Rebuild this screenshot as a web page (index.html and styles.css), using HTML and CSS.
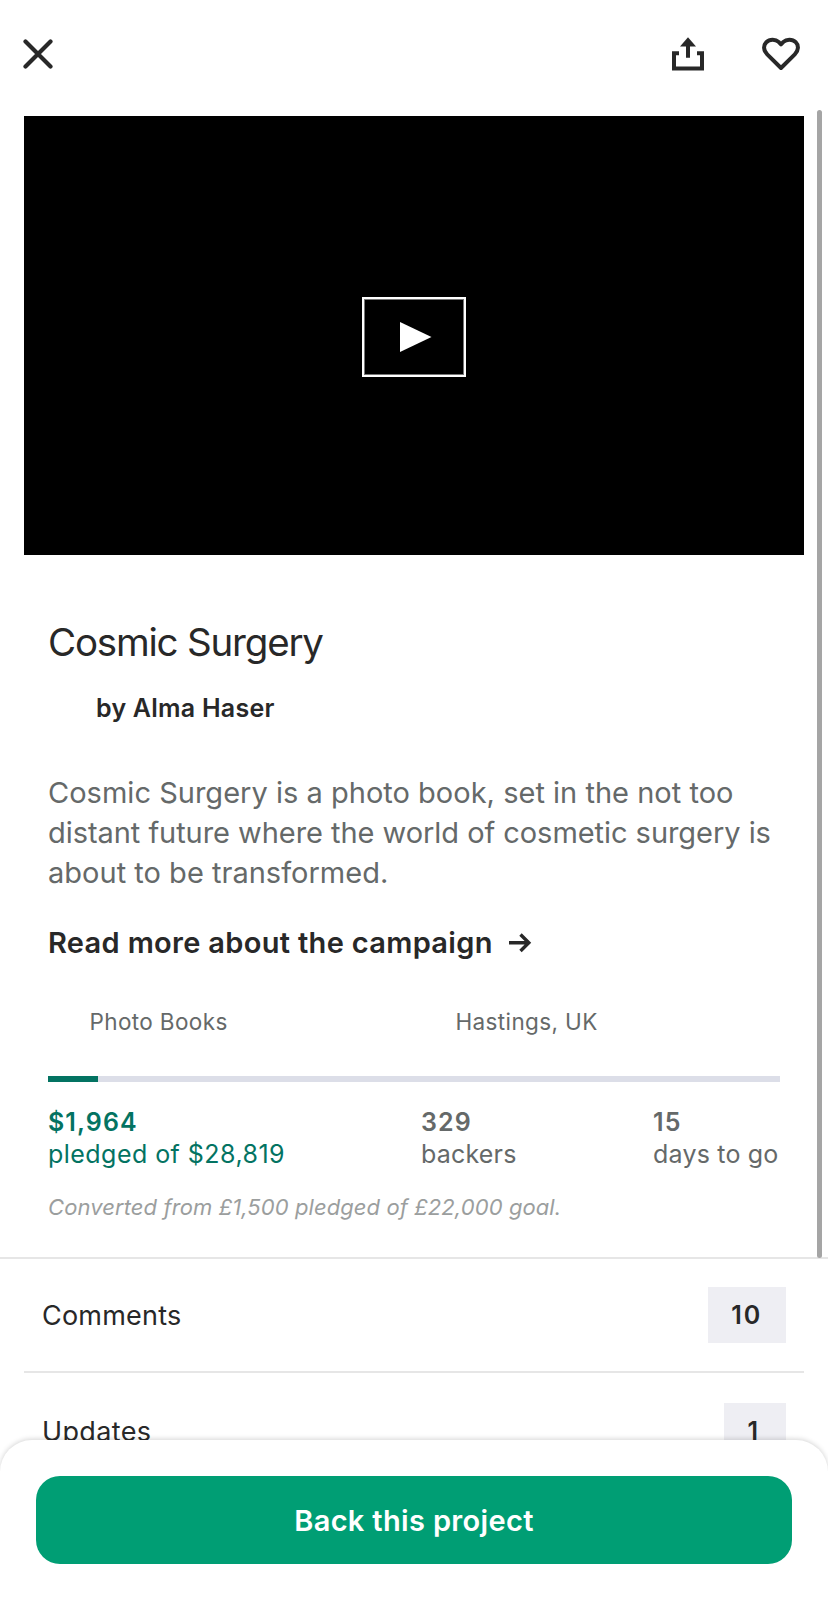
FILE: index.html
```html
<!DOCTYPE html>
<html lang="en">
<head>
<meta charset="utf-8">
<title>Cosmic Surgery</title>
<link rel="stylesheet" href="styles.css">
</head>
<body>
<div class="screen">
  <header class="toolbar">
    <button class="icon-button" aria-label="Close">
      <svg width="30" height="30" viewBox="0 0 30 30"><path d="M2.5 2.5 27.5 27.5M27.5 2.5 2.5 27.5" fill="none" stroke="#282828" stroke-width="4.2" stroke-linecap="round"/></svg>
    </button>
    <div class="toolbar-actions">
      <button class="icon-button" aria-label="Share">
        <svg width="34" height="34" viewBox="0 0 34 34"><path d="M8 16.300H3v15.200h28V16.300h-5M17 8v12.800" fill="none" stroke="#282828" stroke-width="4"/><path d="M17 .3 25 9.500H9z" fill="#282828"/></svg>
      </button>
      <button class="icon-button" aria-label="Save">
        <svg width="38" height="34" viewBox="0 0 38 34"><path d="M19 31 5.200 17.400C1.200 13.400 1.200 8.200 4.300 5.200c3.400-3.400 9.200-3.300 12.300-.3L19 7.400l2.400-2.500c3.100-3 8.900-3.100 12.300.3 3.100 3 3.100 8.200-.9 12.200Z" fill="none" stroke="#282828" stroke-width="4" stroke-linejoin="round"/></svg>
      </button>
    </div>
  </header>

  <main>
    <div class="video">
      <button class="play" aria-label="Play">
        <svg width="32" height="30" viewBox="0 0 32 30"><path d="M0 0 31.500 15 0 30z" fill="#fff"/></svg>
      </button>
    </div>

    <section class="project">
      <h1 class="title">Cosmic Surgery</h1>
      <p class="creator">by Alma Haser</p>
      <p class="blurb">
        <span class="blurb-line">Cosmic Surgery is a photo book, set in the not too</span>
        <span class="blurb-line blurb-line-tight">distant future where the world of cosmetic surgery is</span>
        <span class="blurb-line">about to be transformed.</span>
      </p>
      <a class="read-more">Read more about the campaign
        <svg width="23" height="20" viewBox="0 0 23 20"><path d="M0 9.700h20M11.500 1.500 19.800 9.700 11.500 18" fill="none" stroke="#282828" stroke-width="3.400"/></svg>
      </a>
      <div class="tags">
        <span class="tag">Photo Books</span>
        <span class="tag">Hastings, UK</span>
      </div>
      <div class="progress"><div class="progress-fill"></div></div>
      <div class="stats">
        <div class="stat stat-pledged"><strong>$1,964</strong><span class="stat-goal">pledged of $28,819</span></div>
        <div class="stat stat-backers"><strong>329</strong><span>backers</span></div>
        <div class="stat"><strong>15</strong><span>days to go</span></div>
      </div>
      <p class="conversion">Converted from £1,500 pledged of £22,000 goal.</p>
    </section>

    <nav class="links">
      <a class="link-row"><span>Comments</span><span class="badge">10</span></a>
      <a class="link-row link-row-updates"><span>Updates</span><span class="badge">1</span></a>
    </nav>
  </main>

  <div class="scrollbar"></div>
  <footer class="pledge-bar"><button class="pledge-button">Back this project</button></footer>
</div>
</body>
</html>
```
FILE: styles.css
```css
* { box-sizing: border-box; }

body {
  margin: 0;
  background: #fff;
  color: #282828;
  font-family: Inter, "Liberation Sans", sans-serif;
}

h1, p { margin: 0; }

button {
  padding: 0;
  border: 0;
  background: none;
  font-family: inherit;
}

svg { display: block; }

.screen {
  position: relative;
  height: 1600px;
  overflow: hidden;
}

.toolbar {
  display: flex;
  justify-content: space-between;
  align-items: center;
  height: 116px;
  padding: 0 28px 8px 23px;
}

.toolbar-actions { display: flex; gap: 57px; }

.video {
  display: flex;
  align-items: center;
  justify-content: center;
  height: 439px;
  margin: 0 24px;
  padding-top: 3px;
  background: #000;
}

.play {
  display: flex;
  align-items: center;
  justify-content: center;
  width: 104px;
  height: 80px;
  padding-left: 4px;
  border: 2px solid #fff;
  box-shadow: inset 0 0 0 1px #777;
}

.project {
  height: 702px;
  padding: 63px 48px 0;
}

.title {
  font-size: 38.5px;
  font-weight: 400;
  line-height: 48px;
  letter-spacing: -1.2px;
}

.creator {
  margin-top: 26px;
  padding-left: 48px;
  font-size: 25px;
  font-weight: 600;
  line-height: 32px;
  letter-spacing: 0.24px;
}

.blurb {
  margin-top: 49px;
  color: #656969;
  font-size: 29px;
  line-height: 40px;
  letter-spacing: 0.015px;
}

.blurb-line { display: block; white-space: nowrap; }
.blurb-line-tight { letter-spacing: -0.05px; }

.read-more {
  display: flex;
  align-items: center;
  gap: 16px;
  margin-top: 30px;
  font-size: 29px;
  font-weight: 600;
  line-height: 40px;
  letter-spacing: 0.32px;
}

.tags {
  display: grid;
  grid-template-columns: 1fr 1fr;
  margin-top: 44px;
  color: #656969;
  font-size: 22.5px;
  line-height: 30px;
  letter-spacing: 0.37px;
}

.tag { padding-left: 41.5px; }

.progress {
  height: 6px;
  margin-top: 39px;
  background: #dcdee8;
}

.progress-fill {
  width: 50px;
  height: 100%;
  background: #037362;
}

.stats {
  display: grid;
  grid-template-columns: 373px 232px 1fr;
  margin-top: 24px;
  color: #656969;
  font-size: 25px;
  line-height: 32px;
  letter-spacing: 0.2px;
}

.stat { display: flex; flex-direction: column; white-space: nowrap; }
.stat strong { font-weight: 600; letter-spacing: 1.1px; }
.stat-pledged { color: #037362; }
.stat .stat-goal { letter-spacing: 0.46px; }

.conversion {
  margin-top: 22px;
  color: #9b9e9e;
  font-size: 22px;
  font-style: italic;
  line-height: 30px;
  letter-spacing: 0.09px;
}

.links { border-top: 2px solid #e6e6e6; }

.link-row {
  display: flex;
  align-items: center;
  justify-content: space-between;
  height: 114px;
  margin: 0 24px;
  padding: 0 18px;
  border-bottom: 2px solid #e6e6e6;
  font-size: 27px;
  letter-spacing: 0.22px;
}

.link-row-updates { padding-top: 4px; letter-spacing: 0.35px; }

.badge {
  min-width: 62px;
  padding: 0 24px 0 23.5px;
  background: #eeeef3;
  font-size: 25px;
  font-weight: 600;
  line-height: 56px;
  letter-spacing: 1.8px;
}

.scrollbar {
  position: absolute;
  top: 110px;
  right: 6px;
  width: 5px;
  height: 1148px;
  border-radius: 3px;
  background: #a5a5a5;
}

.pledge-bar {
  position: absolute;
  left: 0;
  right: 0;
  bottom: 0;
  height: 160px;
  padding: 36px;
  border-radius: 32px 32px 0 0;
  background: #fff;
  box-shadow: 0 -1px 5px rgba(0, 0, 0, 0.17);
}

.pledge-button {
  width: 756px;
  height: 88px;
  border-radius: 24px;
  background: #009e74;
  color: #fff;
  font-size: 29px;
  font-weight: 600;
  letter-spacing: 0.336px;
}
```
